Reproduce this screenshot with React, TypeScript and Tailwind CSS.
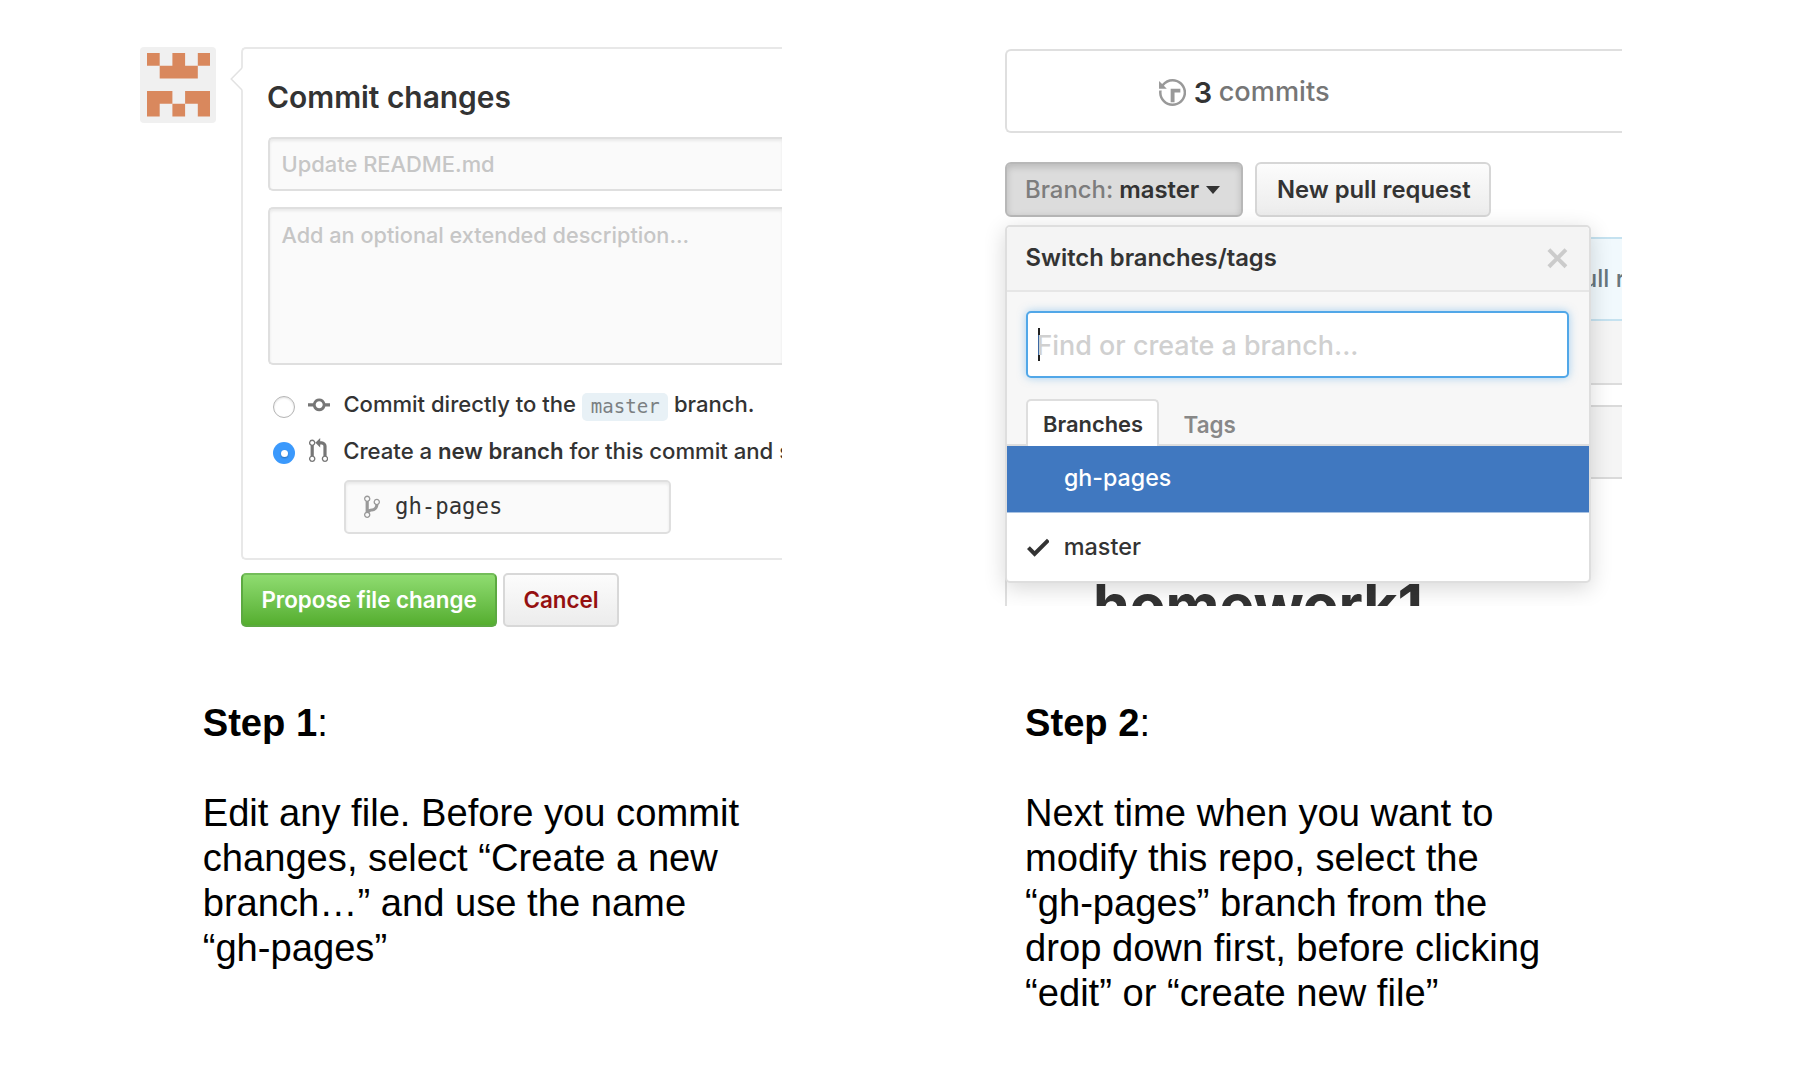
import React from "react";

const PATHS = {
  commit:
    "M10.86 7c-.45-1.72-2-3-3.86-3-1.86 0-3.41 1.28-3.86 3H0v2h3.14c.45 1.72 2 3 3.86 3 1.86 0 3.41-1.28 3.86-3H14V7h-3.14zM7 10.2c-1.22 0-2.2-.98-2.2-2.2 0-1.22.98-2.2 2.2-2.2 1.22 0 2.2.98 2.2 2.2 0 1.22-.98 2.2-2.2 2.2z",
  pull: "M11 11.28V5c-.03-.78-.34-1.47-.94-2.06C9.46 2.35 8.78 2.03 8 2H7V0L4 3l3 3V4h1c.27.02.48.11.69.31.21.2.3.42.31.69v6.28A1.993 1.993 0 0 0 10 15a1.993 1.993 0 0 0 1-3.72zm-1 2.92c-.66 0-1.2-.55-1.2-1.2 0-.65.55-1.2 1.2-1.2.65 0 1.2.55 1.2 1.2 0 .65-.55 1.2-1.2 1.2zM4 3c0-1.11-.89-2-2-2a1.993 1.993 0 0 0-1 3.72v6.56A1.993 1.993 0 0 0 2 15a1.993 1.993 0 0 0 1-3.72V4.72c.59-.34 1-.98 1-1.72zm-.8 10c0 .66-.55 1.2-1.2 1.2-.65 0-1.2-.55-1.2-1.2 0-.65.55-1.2 1.2-1.2.65 0 1.2.55 1.2 1.2zM2 4.2C1.34 4.2.8 3.65.8 3c0-.65.55-1.2 1.2-1.2.65 0 1.2.55 1.2 1.2 0 .65-.55 1.2-1.2 1.2z",
  branch:
    "M10 5c0-1.11-.89-2-2-2a1.993 1.993 0 0 0-1 3.72v.3c-.02.52-.23.98-.63 1.38-.4.4-.86.61-1.38.63-.83.02-1.48.16-2 .45V4.72a1.993 1.993 0 0 0-1-3.72C.88 1 0 1.89 0 3a2 2 0 0 0 1 1.72v6.56c-.59.35-1 .99-1 1.72 0 1.11.89 2 2 2 1.11 0 2-.89 2-2 0-.53-.2-1-.53-1.36.09-.06.48-.41.59-.47.25-.11.56-.17.94-.17 1.05-.05 1.95-.45 2.75-1.25S8.95 7.77 9 6.73h-.02C9.59 6.37 10 5.73 10 5zM2 1.8c.66 0 1.2.55 1.2 1.2 0 .65-.55 1.2-1.2 1.2C1.35 4.2.8 3.65.8 3c0-.65.55-1.2 1.2-1.2zm0 12.41c-.66 0-1.2-.55-1.2-1.2 0-.65.55-1.2 1.2-1.2.65 0 1.2.55 1.2 1.2 0 .65-.55 1.2-1.2 1.2zm6-8c-.66 0-1.2-.55-1.2-1.2 0-.65.55-1.2 1.2-1.2.65 0 1.2.55 1.2 1.2 0 .65-.55 1.2-1.2 1.2z",
  history:
    "M8 13H6V6h5v2H8v5zM7 1C4.81 1 2.87 2.02 1.59 3.59L0 2v4h4L2.5 4.5C3.55 3.17 5.17 2.3 7 2.3c3.14 0 5.7 2.56 5.7 5.7s-2.56 5.7-5.7 5.7A5.71 5.71 0 0 1 1.3 8c0-.34.03-.67.09-1H.08C.03 7.33 0 7.66 0 8c0 3.86 3.14 7 7 7s7-3.14 7-7-3.14-7-7-7z",
  check: "M12 5l-8 8-4-4 1.5-1.5L4 10l6.5-6.5z",
  close:
    "M7.48 8l3.75 3.75-1.48 1.48L6 9.48l-3.75 3.75-1.48-1.48L4.52 8 .77 4.25l1.48-1.48L6 6.52l3.75-3.75 1.48 1.48z",
};

function Icon({ name, box, className }: { name: keyof typeof PATHS; box: number; className: string }) {
  return (
    <svg viewBox={`0 0 ${box} 16`} className={`shrink-0 fill-current ${className}`} aria-hidden="true">
      <path d={PATHS[name]} />
    </svg>
  );
}

// One path keeps the identicon's neighbouring cells free of seams.
const AVATAR = "M0 0h1v1h1v-1h1v1h1v-1h1v1h-1v1h-3v-1h-1zM0 3h2v1h-1v1h-1zM3 3h2v2h-1v-1h-1zM2 4h1v1h-1z";

function Avatar() {
  return (
    <div className="ml-[140px] h-[76px] w-[76px] shrink-0 rounded-[4px] bg-[#f0f0f0] pl-[6.5px] pt-[6px]">
      <svg viewBox="0 0 5 5" className="h-[63.5px] w-[63.5px] fill-[#d9885d]">
        <path d={AVATAR} />
      </svg>
    </div>
  );
}

function CommitForm() {
  return (
    <div className="flex h-[640px] items-start pt-[47px]">
      <Avatar />
      <div className="relative ml-[25px] w-[541px]">
        <div className="h-[513px] overflow-hidden whitespace-nowrap rounded-l-[5px] border-y-2 border-l-2 border-[#e8e8e8] pl-[25px] pt-[30px]">
          <h2 className="ml-[-1px] text-[29.9px] font-semibold leading-[36px]">Commit changes</h2>
          <div className="mt-[22px] flex h-[54px] items-center rounded-l-[5px] border-y-2 border-l-2 border-[#dfdfdf] bg-[#fafafa] pl-[11.5px] pt-[1px] text-[21.9px] text-[#c6c6c6] shadow-[inset_0_2px_3px_rgba(0,0,0,0.07)]">
            Update README.md
          </div>
          <div className="mt-4 h-[158px] rounded-l-[5px] border-y-2 border-l-2 border-[#dfdfdf] bg-[#fafafa] pl-[11.5px] pt-[10.5px] text-[21.7px] leading-[30px] text-[#c6c6c6] shadow-[inset_0_2px_3px_rgba(0,0,0,0.07)]">
            Add an optional extended description...
          </div>
          <div className="mt-[25px] flex h-[30px] items-center pl-[5px] text-[22.05px]">
            <span className="mt-[4px] h-[22px] w-[22px] rounded-full border border-[#b4b4b4] bg-white shadow-[inset_0_1px_2px_rgba(0,0,0,0.12)]" />
            <Icon name="commit" box={14} className="ml-[13px] h-[25.6px] w-[22.4px] text-[#767676]" />
            <span className="ml-[13px]">Commit directly to the</span>
            <code className="ml-[6px] mt-[4px] h-[28px] w-[86.5px] rounded-[5px] bg-[#e8f1f6] text-center font-['DejaVu_Sans_Mono',monospace] text-[19.1px] leading-[27px] text-[#7b8082]">
              master
            </code>
            <span className="ml-[5.5px]">branch.</span>
          </div>
          <div className="mt-4 flex h-[30px] items-center pl-[5px] text-[22.2px]">
            <span className="mt-[4px] flex h-[22px] w-[22px] shrink-0 items-center justify-center rounded-full bg-[#3b99fc]">
              <span className="h-[7px] w-[7px] rounded-full bg-white shadow-[0_1px_2px_rgba(0,0,0,0.3)]" />
            </span>
            <Icon name="pull" box={12} className="ml-[14px] h-[25.6px] w-[19.2px] text-[#767676]" />
            <span className="ml-[15px] tracking-[-0.03px]">
              Create a <b className="font-semibold">new branch</b> for this commit and start a pull request
            </span>
          </div>
          <div className="ml-[76px] mt-[14px] flex h-[54px] w-[327px] items-center rounded-[5px] border-2 border-[#dfdfdf] bg-[#fafafa] pl-[17.5px] font-['DejaVu_Sans_Mono',monospace] text-[22.3px] shadow-[inset_0_2px_3px_rgba(0,0,0,0.07)]">
            <Icon name="branch" box={10} className="h-[25.6px] w-[16px] text-[#999999]" />
            <span className="ml-[15.5px]">gh-pages</span>
          </div>
        </div>
        <svg viewBox="0 0 13 24" className="absolute left-[-11px] top-[20px] h-[24px] w-[13px]">
          <path d="M13 0.5 L1.5 12 L13 23.5" fill="#fff" />
          <path d="M12 1 L1.2 12 L12 23" fill="none" stroke="#e2e2e2" strokeWidth="1.5" />
        </svg>
        <div className="mt-[13px] flex gap-[6px] text-[22.4px] font-semibold">
          <button className="h-[54px] w-[256px] rounded-[5px] border-2 border-[#5ca941] bg-linear-to-b from-[#8fdc70] to-[#55ae2e] text-white [border-top-color:#74bd5a]">
            Propose file change
          </button>
          <button className="h-[54px] w-[116px] rounded-[5px] border-2 border-[#d8d8d8] bg-linear-to-b from-[#fcfcfc] to-[#ececec] text-[#951010]">
            Cancel
          </button>
        </div>
      </div>
    </div>
  );
}

function BranchMenu() {
  return (
    <div className="absolute left-[20px] top-[225px] h-[358px] w-[586px] overflow-visible rounded-[5px] border-2 border-[#dedede] bg-white bg-clip-padding shadow-[0_5px_22px_rgba(0,0,0,0.16)]">
      <div className="flex h-[65px] items-center justify-between rounded-t-[4px] border-b-2 border-[#e6e6e6] bg-[#f4f4f4] pl-[18.5px] pr-[20px]">
        <span className="mt-[-2px] text-[23.8px] font-semibold">Switch branches/tags</span>
        <Icon name="close" box={12} className="h-[30.4px] w-[22.8px] text-[#cbcbcb]" />
      </div>
      <div className="h-[154px] border-b-2 border-[#dedede] bg-[#f7f7f7] pl-[19px] pr-[20px] pt-[19px]">
        <div className="flex h-[67px] items-center rounded-[5px] border-2 border-[#51a7e8] bg-white pl-[10px] shadow-[0_0_9px_rgba(81,167,232,0.5)]">
          <span className="h-[33px] w-[1.5px] bg-[#222]" />
          <span className="ml-[-3px] mt-[1px] text-[26.9px] text-[#d0d0d0]">Find or create a branch...</span>
        </div>
        <div className="mt-[21px] flex h-[47px] text-[21.9px] font-semibold leading-[47px]">
          <div className="w-[132.5px] rounded-t-[5px] border-x-2 border-t-2 border-[#dedede] bg-white pl-[15px]">Branches</div>
          <div className="pl-[25px] pt-[2px] text-[22.4px] text-[#888]">Tags</div>
        </div>
      </div>
      <div className="h-[67px] border-b border-[#a8c2e2] bg-[#4078c0] pl-[57px] text-[23.2px] font-medium leading-[65px] text-white">
        gh-pages
      </div>
      <div className="flex h-[68px] items-center pl-[19.5px] text-[23.4px]">
        <Icon name="check" box={12} className="h-[30.4px] w-[22.8px]" />
        <span className="ml-[14.5px]">master</span>
      </div>
    </div>
  );
}

function RepoPage() {
  return (
    <div className="h-[640px]">
      <div className="relative ml-[-20px] flex h-[606px] w-[637px] flex-col overflow-hidden whitespace-nowrap pl-[20px] pt-[49px]">
        <div className="flex h-[84px] shrink-0 items-center rounded-l-[6px] border-y-2 border-l-2 border-[#dfdfdf] pl-[152px] text-[27.2px]">
          <Icon name="history" box={14} className="mt-[2px] h-[31px] w-[27.2px] text-[#999]" />
          <b className="ml-[7.5px] mt-[3px] text-[29px] font-semibold">3</b>
          <span className="ml-[6.5px] mt-[3px] text-[#767676]">commits</span>
        </div>
        <div className="mt-[29px] flex h-[55px] shrink-0 gap-[12px] text-[24px]">
          <button className="flex w-[238px] items-center rounded-[6px] border-2 border-[#b8b8b8] bg-[#dcdcdc] pl-[18px] shadow-[inset_0_3px_7px_rgba(0,0,0,0.16)]">
            <span className="mt-[1px] text-[23.9px] text-[#7d7d7d]">Branch:</span>
            <b className="ml-[6px] text-[23.9px] font-semibold">master</b>
            <span className="ml-[7px] border-x-[7.5px] border-t-[8px] border-x-transparent border-t-[#333]" />
          </button>
          <button className="w-[236px] rounded-[6px] border-2 border-[#d6d6d6] bg-linear-to-b from-[#fcfcfc] to-[#ececec] pl-[1.5px] text-[23.8px] font-semibold">
            New pull request
          </button>
        </div>
        <div className="mt-[20px] flex h-[84px] shrink-0 items-center border-y-2 border-l-2 border-[#c5e2f0] bg-[#f1f9fd] pl-[561px] text-[24px] text-[#68777d]">
          pull request
        </div>
        <div className="h-[64px] shrink-0 border-b-2 border-l-2 border-[#dcdcdc] bg-[#f5f5f5]" />
        <div className="mt-[20px] h-[74px] shrink-0 border-2 border-r-0 border-[#dadada] bg-[#f5f5f5]" />
        <h1 className="flex-1 border-l-2 border-[#e0e0e0] pl-[86px] pt-[97px] text-[59.2px] font-bold leading-[60px] tracking-[-0.3px]">
          homework1
        </h1>
        <BranchMenu />
      </div>
    </div>
  );
}

function Step({ n, lines }: { n: number; lines: string[] }) {
  return (
    <div className="pt-[60px] font-['Liberation_Sans',Arial,sans-serif] text-[38.15px] leading-[45px] text-black">
      <p>
        <b>Step {n}</b>:
      </p>
      <p className="mt-[45px] whitespace-nowrap">
        {lines.map((line) => (
          <span key={line} className="block">
            {line}
          </span>
        ))}
      </p>
    </div>
  );
}

export default function App() {
  return (
    <main className="flex h-[1075px] overflow-hidden bg-white font-['Inter',sans-serif] font-[450] text-[#333]">
      <section className="w-[1005px] shrink-0">
        <CommitForm />
        <div className="pl-[202.7px] font-normal">
          <Step
            n={1}
            lines={["Edit any file. Before you commit", "changes, select “Create a new", "branch…” and use the name", "“gh-pages”"]}
          />
        </div>
      </section>
      <section className="flex-1">
        <RepoPage />
        <div className="pl-[20px] font-normal">
          <Step
            n={2}
            lines={[
              "Next time when you want to",
              "modify this repo, select the",
              "“gh-pages” branch from the",
              "drop down first, before clicking",
              "“edit” or “create new file”",
            ]}
          />
        </div>
      </section>
    </main>
  );
}
